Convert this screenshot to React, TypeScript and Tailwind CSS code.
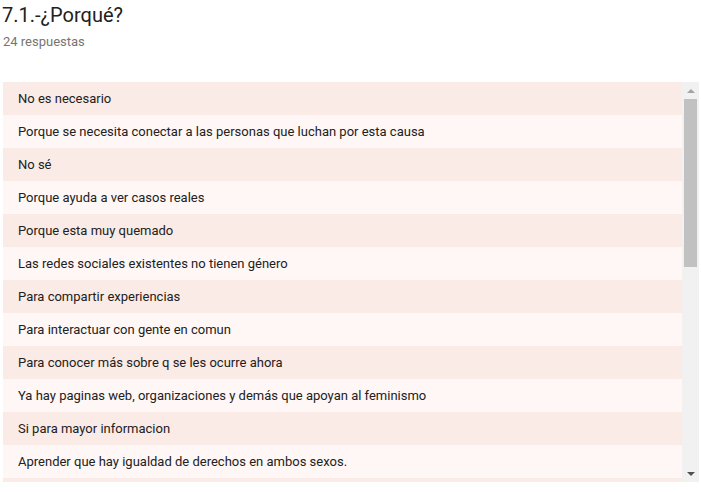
import React from 'react';

const answers: string[] = [
  'No es necesario',
  'Porque se necesita conectar a las personas que luchan por esta causa',
  'No sé',
  'Porque ayuda a ver casos reales',
  'Porque esta muy quemado',
  'Las redes sociales existentes no tienen género',
  'Para compartir experiencias',
  'Para interactuar con gente en comun',
  'Para conocer más sobre q se les ocurre ahora',
  'Ya hay paginas web, organizaciones y demás que apoyan al feminismo',
  'Si para mayor informacion',
  'Aprender que hay igualdad de derechos en ambos sexos.',
  '',
];

const Arrow = ({ up, color }: { up: boolean; color: string }) => (
  <svg width="8" height="4" viewBox="0 0 8 4">
    <polygon points={up ? '0,4 4,0 8,4' : '0,0 8,0 4,4'} fill={color} />
  </svg>
);

export default function App() {
  return (
    <div className="w-[701px] h-[492px] bg-white overflow-hidden font-['Roboto','Liberation_Sans',sans-serif] text-[#212121]">
      <div className="pl-[2px] pt-[4px] text-[20px] leading-[23px]">7.1.-¿Porqué?</div>
      <div className="pl-[3px] mt-[7px] text-[13px] leading-[16px] text-[#757575]">24 respuestas</div>

      {/* answers list with scrollbar */}
      <div className="ml-[3px] mt-[32px] w-[696px] h-[400px] flex">
        <div className="flex-1 overflow-hidden">
          {answers.map((a, i) => (
            <div
              key={i}
              className={`h-[33px] flex items-center pl-[15px] text-[13px] ${i % 2 === 0 ? 'bg-[#fbebe6]' : 'bg-[#fff7f6]'}`}
            >
              {a}
            </div>
          ))}
        </div>
        <div className="w-[17px] bg-[#f1f1f1] flex flex-col">
          <div className="h-[17px] flex items-center justify-center">
            <Arrow up color="#a3a3a3" />
          </div>
          <div className="flex-1 px-[2px]">
            <div className="h-[168px] bg-[#c1c1c1]" />
          </div>
          <div className="h-[17px] flex items-center justify-center">
            <Arrow up={false} color="#505050" />
          </div>
        </div>
      </div>
    </div>
  );
}
